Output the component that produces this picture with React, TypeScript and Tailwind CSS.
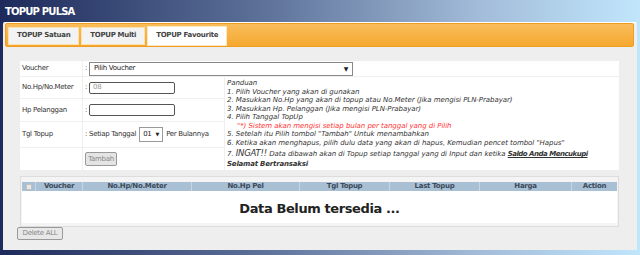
import React from "react";

const guideLines = [
  "1. Pilih Voucher yang akan di gunakan",
  "2. Masukkan No.Hp yang akan di topup atau No.Meter (Jika mengisi PLN-Prabayar)",
  "3. Masukkan Hp. Pelanggan (Jika mengisi PLN-Prabayar)",
  "4. Pilih Tanggal TopUp",
];

const columns = [
  { label: "", width: "w-[14px]" },
  { label: "Voucher", width: "w-[47px]" },
  { label: "No.Hp/No.Meter", width: "w-[109px]" },
  { label: "No.Hp Pel", width: "w-[108px]" },
  { label: "Tgl Topup", width: "w-[90px]" },
  { label: "Last Topup", width: "w-[90px]" },
  { label: "Harga", width: "w-[92px]" },
  { label: "Action", width: "flex-1" },
];

const Tab = ({ label, active }: { label: string; active?: boolean }) => (
  <div
    className={
      active
        ? "h-[20px] px-[8px] flex items-center bg-white border border-[#fde7c0] font-bold text-[#444]"
        : "h-[18px] px-[8px] flex items-center bg-[#f3f3f3] border border-[#fbe0b0] font-bold text-[#444]"
    }
  >
    {label}
  </div>
);

const App = () => {
  return (
    <div className="w-[640px] h-[255px] overflow-hidden bg-[linear-gradient(to_right,#1d2a5b_0%,#5b6f97_40%,#a3bcd9_75%,#c0e6fc_100%)] font-['DejaVu_Sans',Verdana,sans-serif] text-[7px] tracking-[-0.3px] text-[#333]">
      <div className="h-[22px] px-[5px] flex items-center text-white font-bold text-[10px] tracking-[-0.8px]">
        TOPUP PULSA
      </div>

      <div className="mx-[3px] h-[228px] bg-[#eeeeee] border-t border-white rounded-t-[2px] pl-[2px] pr-[3px] flex flex-col">
        {/* tab bar */}
        <div className="h-[24px] bg-[linear-gradient(to_bottom,#f9bd5c,#f5a92f)] border border-[#ee9d22] rounded-[2px] flex items-center gap-[2px] pl-[2px] pt-[1px]">
          <Tab label="TOPUP Satuan" />
          <Tab label="TOPUP Multi" />
          <Tab label="TOPUP Favourite" active />
        </div>

        {/* form */}
        <div className="mt-[14px] mx-[15px] bg-white grid grid-cols-[63px_142px_1fr] grid-rows-[16px_22px_23px_26px_22px]">
          <div className="border-b border-r border-[#efefef] flex items-center pl-[2px]">Voucher</div>
          <div className="col-span-2 border-b border-[#efefef] flex items-center pl-[2px] gap-[2px]">
            <span>:</span>
            <div className="w-[264px] h-[14px] border border-[#888] bg-white flex items-center justify-between px-[4px]">
              <span className="text-[#222]">Pilih Voucher</span>
              <span className="text-[6px] text-[#222]">▼</span>
            </div>
          </div>

          <div className="border-b border-r border-[#efefef] flex items-center pl-[2px]">No.Hp/No.Meter</div>
          <div className="border-b border-r border-[#efefef] flex items-center pl-[2px] gap-[2px]">
            <span>:</span>
            <div className="w-[86px] h-[12px] border border-[#555] rounded-[2px] flex items-center px-[3px] text-[#999]">08</div>
          </div>

          <div className="row-span-4 pl-[2px] pt-[2px] italic text-[#333] leading-[8.5px] tracking-[-0.05px] whitespace-nowrap">
            <div>Panduan</div>
            {guideLines.map((line) => (
              <div key={line}>{line}</div>
            ))}
            <div className="pl-[10px] text-[#ff3333]">"*) Sistem akan mengisi setiap bulan per tanggal yang di Pilih</div>
            <div>5. Setelah itu Pilih tombol "Tambah" Untuk menambahkan</div>
            <div>6. Ketika akan menghapus, pilih dulu data yang akan di hapus, Kemudian pencet tombol "Hapus"</div>
            <div className="leading-[11px] mt-[1px]">
              7. <span className="text-[8.5px] tracking-[-0.2px]">INGAT!!</span> Data dibawah akan di Topup setiap tanggal yang di Input dan ketika{" "}
              <span className="font-bold underline tracking-[-0.5px]">Saldo Anda Mencukupi</span>
            </div>
            <div className="font-bold tracking-[-0.2px]">Selamat Bertransaksi</div>
          </div>

          <div className="border-b border-r border-[#efefef] flex items-center pl-[2px]">Hp Pelanggan</div>
          <div className="border-b border-r border-[#efefef] flex items-center pl-[2px] gap-[2px]">
            <span>:</span>
            <div className="w-[86px] h-[12px] border border-[#555] rounded-[2px]" />
          </div>

          <div className="border-b border-r border-[#efefef] flex items-center pl-[2px]">Tgl Topup</div>
          <div className="border-b border-r border-[#efefef] flex items-center pl-[2px] gap-[3px]">
            <span>: Setiap Tanggal</span>
            <div className="w-[24px] h-[15px] border border-[#999] bg-white flex items-center justify-between px-[3px] text-[#222]">
              <span>01</span>
              <span className="text-[5px]">▼</span>
            </div>
            <span>Per Bulannya</span>
          </div>

          <div className="border-r border-[#efefef]" />
          <div className="border-r border-[#efefef] flex items-center pl-[2px]">
            <div className="h-[14px] w-[32px] border border-[#999] rounded-[2px] bg-[#e4e4e4] text-[#888] flex items-center justify-center">
              Tambah
            </div>
          </div>
        </div>

        {/* table */}
        <div className="mt-[6px] mx-[15px] border border-[#dcdcdc] bg-[#f4f4f4] pt-[5px] pb-[3px] px-px">
          <div className="flex h-[9px] bg-[#a9bfd4] font-bold text-[#3a4a5a]">
            {columns.map((col, i) => (
              <div
                key={i}
                className={`${col.width} flex items-center justify-center ${i < columns.length - 1 ? "border-r border-[#c9d6e2]" : ""}`}
              >
                {i === 0 ? (
                  <div className="w-[6px] h-[6px] bg-[#e8e8e8] border border-[#c0c0c0]" />
                ) : (
                  col.label
                )}
              </div>
            ))}
          </div>
          <div className="h-[32px] bg-white flex items-center justify-center text-[13px] font-bold tracking-[-0.4px] text-[#222] pt-[4px]">
            Data Belum tersedia ...
          </div>
        </div>

        <div className="mt-0 ml-[12px] w-[46px] h-[13px] border border-[#999] rounded-[2px] bg-[#e8e8e8] text-[#888] flex items-center justify-center">
          Delete ALL
        </div>
      </div>
    </div>
  );
};

export default App;
